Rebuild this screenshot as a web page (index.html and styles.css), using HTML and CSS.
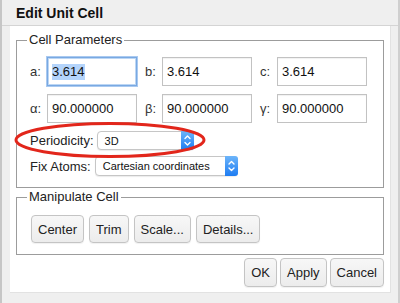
FILE: index.html
```html
<!DOCTYPE html>
<html lang="en">
<head>
  <meta charset="UTF-8" />
  <title>Edit Unit Cell</title>
  <link rel="stylesheet" href="styles.css">
</head>
<body>

<div class="dialog">
  <div class="titlebar">Edit Unit Cell</div>
  <div class="panel">
    <fieldset class="group">
      <legend>Cell Parameters</legend>
      <div class="params">
        <div class="param"><label>a:</label><div class="field focused"><span class="sel">3.614</span></div></div>
        <div class="param"><label>b:</label><div class="field">3.614</div></div>
        <div class="param"><label>c:</label><div class="field">3.614</div></div>
        <div class="param"><label>α:</label><div class="field">90.000000</div></div>
        <div class="param"><label>β:</label><div class="field">90.000000</div></div>
        <div class="param"><label>γ:</label><div class="field">90.000000</div></div>
      </div>
      <div class="option-row">
        <label>Periodicity:</label>
        <div class="select periodicity">
          <span>3D</span>
          <span class="arrows"><svg width="13" height="17" viewBox="0 0 13 17"><path d="M4 6.5 L6.5 4 L9 6.5 M4 10.5 L6.5 13 L9 10.5" fill="none" stroke="#fff" stroke-width="1.4" stroke-linecap="round" stroke-linejoin="round"/></svg></span>
        </div>
      </div>
      <div class="option-row second">
        <label>Fix Atoms:</label>
        <div class="select fix">
          <span>Cartesian coordinates</span>
          <span class="arrows"><svg width="13" height="18" viewBox="0 0 13 18"><path d="M4 7 L6.5 4.5 L9 7 M4 11 L6.5 13.5 L9 11" fill="none" stroke="#fff" stroke-width="1.4" stroke-linecap="round" stroke-linejoin="round"/></svg></span>
        </div>
      </div>
    </fieldset>

    <fieldset class="group manip">
      <legend>Manipulate Cell</legend>
      <div class="btn-row">
        <button>Center</button>
        <button>Trim</button>
        <button>Scale...</button>
        <button>Details...</button>
      </div>
    </fieldset>

    <div class="actions">
      <button>OK</button>
      <button>Apply</button>
      <button>Cancel</button>
    </div>
  </div>

  <!-- annotation drawn over the dialog -->
  <svg class="annot" width="400" height="303" viewBox="0 0 400 303">
    <ellipse cx="110" cy="140" rx="94" ry="16.5" fill="none" stroke="#e2261b" stroke-width="3"/>
  </svg>
</div>

</body>
</html>
```

FILE: styles.css
```css
* { box-sizing: border-box; }
body {
  margin: 0;
  background: #ededed;
  font-family: "Liberation Sans", Arial, sans-serif;
  font-size: 13px;
  color: #222;
}
.dialog {
  position: relative;
  width: 400px;
  height: 303px;
  background: #efefef;
  border-left: 2px solid #c6c6c6;
  border-right: 2px solid #cfcfcf;
}
.titlebar {
  height: 26px;
  line-height: 26px;
  padding-left: 14px;
  font-size: 14px;
  font-weight: bold;
  color: #111;
  border-bottom: 1px solid #d4d4d4;
}
.panel {
  margin: 0 7px 0 8px;
  height: 267px;
  background: #fff;
  padding: 6px 6px 0 6px;
  border-right: 1px solid #e2e2e2;
  border-bottom: 1px solid #e2e2e2;
}
.group {
  margin: 0;
  padding: 9px 13px 11px 13px;
  border: 1px solid #9c9c9c;
  min-width: 0;
}
.group legend {
  padding: 0 2px;
  margin-left: -3px;
  line-height: 16px;
  color: #222;
}
.params {
  display: grid;
  grid-template-columns: repeat(3, auto);
  justify-content: start;
  column-gap: 8px;
  row-gap: 8px;
}
.param {
  display: flex;
  align-items: center;
}
.param label {
  width: 17px;
  color: #333;
}
.field {
  width: 90px;
  height: 29px;
  border: 1px solid #c2c2c2;
  padding: 0 4px;
  display: flex;
  align-items: center;
  box-shadow: inset 0 1px 1px rgba(0,0,0,0.06);
  color: #111;
}
.field.focused {
  border-color: #79a9e2;
  box-shadow: 0 0 0 1px #a9c9f0, inset 0 0 0 1px #bcd6f4;
}
.sel {
  background: #b4d4fb;
  line-height: 16px;
}
.option-row {
  display: flex;
  align-items: center;
  gap: 3px;
  margin-top: 8px;
}
.option-row.second { margin-top: 6px; }
.option-row label { color: #222; }
.select {
  display: flex;
  align-items: center;
  height: 19px;
  border: 1px solid #c6c6c6;
  border-radius: 4px;
  background: #fff;
  font-size: 11px;
  padding-left: 7px;
  color: #111;
  box-shadow: 0 1px 1px rgba(0,0,0,0.08);
}
.select.periodicity { width: 97px; }
.select.fix { width: 143px; height: 20px; margin-left: 1px; }
.select .arrows {
  margin-left: auto;
  align-self: stretch;
  width: 13px;
  display: flex;
  align-items: center;
  justify-content: center;
  background: linear-gradient(#6db5fa, #1d7cf2);
  border-radius: 0 3px 3px 0;
  margin-top: -1px;
  margin-bottom: -1px;
  margin-right: -1px;
}
.manip {
  margin-top: 1px;
  padding-top: 10px;
}
.btn-row {
  display: flex;
  gap: 5px;
  padding-left: 1px;
}
button {
  font-family: inherit;
  font-size: 13px;
  color: #222;
  height: 28px;
  padding: 0 6px;
  border: 1px solid #c4c4c4;
  border-radius: 4px;
  background: linear-gradient(#f7f7f7, #ececec);
  box-shadow: 0 1px 1px rgba(0,0,0,0.06);
}
.actions {
  display: flex;
  justify-content: flex-end;
  gap: 3px;
  margin-top: 3px;
}
.actions button { height: 29px; }
.annot {
  position: absolute;
  left: -2px;
  top: 0;
  pointer-events: none;
}
```
